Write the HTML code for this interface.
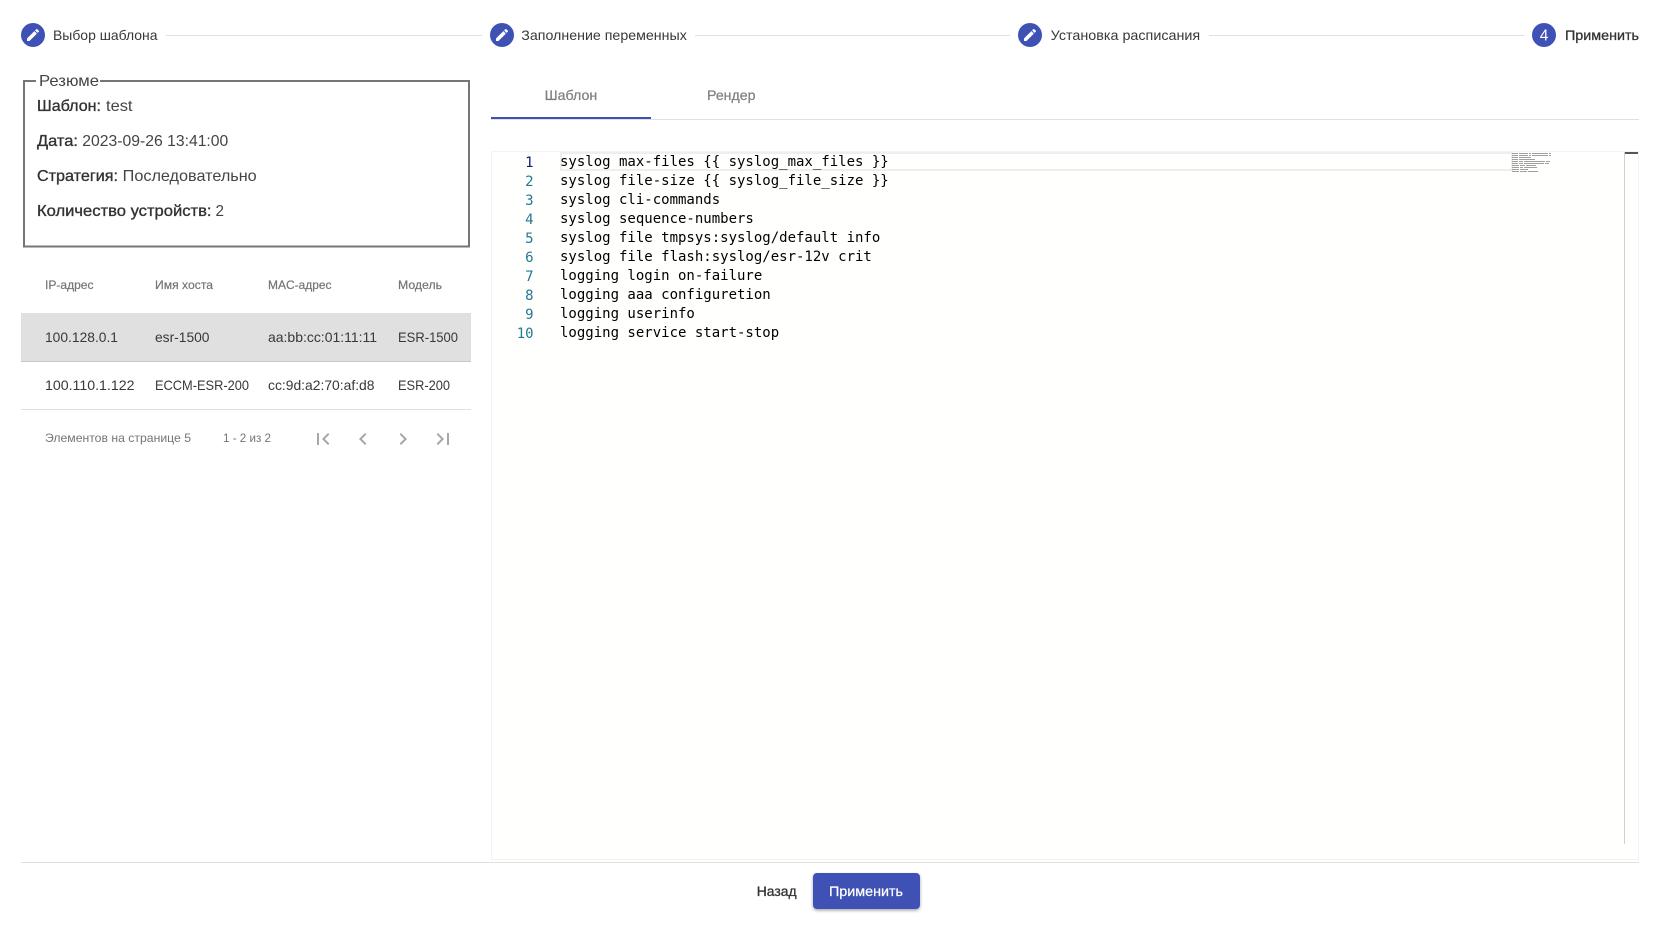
<!DOCTYPE html>
<html lang="ru">
<head>
<meta charset="utf-8">
<title>Применить</title>
<style>
html,body{margin:0;padding:0;background:#fff;width:1660px;height:942px;overflow:hidden}
svg{display:block}
text{font-family:"Liberation Sans","Noto Sans CJK JP",sans-serif;font-size:14px;fill:#383838}
.b{fill:#333;stroke:#333;stroke-width:.3}
.h{font-size:12px;fill:#757575;stroke:#757575;stroke-width:.2}
.p{font-size:12px;fill:#757575}
.s{font-size:16px;fill:#444}
.sb{font-size:16px;fill:#333;stroke:#333;stroke-width:.35}
.t{fill:#808080;stroke:#808080;stroke-width:.25}
.c{font-family:"DejaVu Sans Mono",monospace;fill:#000}
.l{font-family:"DejaVu Sans Mono",monospace;fill:#237893;text-anchor:end}
</style>
</head>
<body>
<svg width="1660" height="942" viewBox="0 0 1660 942" xmlns="http://www.w3.org/2000/svg">
<defs>
<filter id="sh" x="-10%" y="-20%" width="120%" height="150%"><feDropShadow dx="0" dy="1.5" stdDeviation="1.6" flood-color="#000" flood-opacity=".35"/></filter>
<path id="pen" d="M3 17.25V21h3.75L17.81 9.94l-3.75-3.75L3 17.25zM20.71 7.04c.39-.39.39-1.02 0-1.41l-2.34-2.34c-.39-.39-1.02-.39-1.41 0l-1.83 1.83 3.75 3.75 1.83-1.83z" fill="#fff"/>
</defs>

<!-- stepper -->
<rect x="166" y="35" width="316" height="1" fill="#e0e0e0"/>
<rect x="695" y="35" width="315" height="1" fill="#e0e0e0"/>
<rect x="1209" y="35" width="315" height="1" fill="#e0e0e0"/>
<circle cx="33" cy="35" r="12" fill="#3f51b5"/>
<use href="#pen" transform="translate(25 27) scale(.667)"/>
<text x="53" y="40" textLength="104.5" lengthAdjust="spacingAndGlyphs">Выбор шаблона</text>
<circle cx="502" cy="35" r="12" fill="#3f51b5"/>
<use href="#pen" transform="translate(494 27) scale(.667)"/>
<text x="521.3" y="40" textLength="165.5" lengthAdjust="spacingAndGlyphs">Заполнение переменных</text>
<circle cx="1030" cy="35" r="12" fill="#3f51b5"/>
<use href="#pen" transform="translate(1022 27) scale(.667)"/>
<text x="1050.7" y="40" textLength="149.5" lengthAdjust="spacingAndGlyphs">Установка расписания</text>
<circle cx="1544" cy="35" r="12" fill="#3f51b5"/>
<text x="1544" y="40.5" text-anchor="middle" style="fill:#fff;font-size:15.5px">4</text>
<text class="b" x="1565" y="40" textLength="74" lengthAdjust="spacingAndGlyphs">Применить</text>

<!-- summary -->
<rect x="24" y="81" width="445" height="165.5" fill="none" stroke="#767676" stroke-width="2"/>
<rect x="36" y="76" width="64" height="8" fill="#fff"/>
<text class="s" x="39" y="86" textLength="60" lengthAdjust="spacingAndGlyphs">Резюме</text>
<text class="sb" x="37" y="111" textLength="64" lengthAdjust="spacingAndGlyphs">Шаблон:</text>
<text class="s" x="106" y="111" textLength="26.5" lengthAdjust="spacingAndGlyphs">test</text>
<text class="sb" x="37" y="146" textLength="41" lengthAdjust="spacingAndGlyphs">Дата:</text>
<text class="s" x="82.3" y="146" textLength="146" lengthAdjust="spacingAndGlyphs">2023-09-26 13:41:00</text>
<text class="sb" x="37" y="181" textLength="81" lengthAdjust="spacingAndGlyphs">Стратегия:</text>
<text class="s" x="122.7" y="181" textLength="134" lengthAdjust="spacingAndGlyphs">Последовательно</text>
<text class="sb" x="37" y="216" textLength="174.5" lengthAdjust="spacingAndGlyphs">Количество устройств:</text>
<text class="s" x="215.5" y="216" textLength="8.5" lengthAdjust="spacingAndGlyphs">2</text>

<!-- table -->
<text class="h" x="45" y="289" textLength="48.5" lengthAdjust="spacingAndGlyphs">IP-адрес</text>
<text class="h" x="155" y="289" textLength="58" lengthAdjust="spacingAndGlyphs">Имя хоста</text>
<text class="h" x="268" y="289" textLength="63.5" lengthAdjust="spacingAndGlyphs">MAC-адрес</text>
<text class="h" x="398" y="289" textLength="44" lengthAdjust="spacingAndGlyphs">Модель</text>
<rect x="21" y="313" width="450" height="48" fill="#e0e0e0"/>
<rect x="21" y="361" width="450" height="1" fill="#c8c8c8"/>
<rect x="21" y="409" width="450" height="1" fill="#e0e0e0"/>
<text x="45" y="342" textLength="73" lengthAdjust="spacingAndGlyphs">100.128.0.1</text>
<text x="155" y="342" textLength="54.5" lengthAdjust="spacingAndGlyphs">esr-1500</text>
<text x="268" y="342" textLength="109" lengthAdjust="spacingAndGlyphs">aa:bb:cc:01:11:11</text>
<text x="398" y="342" textLength="60" lengthAdjust="spacingAndGlyphs">ESR-1500</text>
<text x="45" y="390" textLength="89.5" lengthAdjust="spacingAndGlyphs">100.110.1.122</text>
<text x="155" y="390" textLength="94" lengthAdjust="spacingAndGlyphs">ECCM-ESR-200</text>
<text x="268" y="390" textLength="106.5" lengthAdjust="spacingAndGlyphs">cc:9d:a2:70:af:d8</text>
<text x="398" y="390" textLength="52" lengthAdjust="spacingAndGlyphs">ESR-200</text>

<!-- paginator -->
<text class="p" x="45" y="442" textLength="146" lengthAdjust="spacingAndGlyphs">Элементов на странице 5</text>
<text class="p" x="223" y="442" textLength="48" lengthAdjust="spacingAndGlyphs">1 - 2 из 2</text>
<g fill="#a6a6a6">
<path transform="translate(311 427)" d="M18.41 16.59L13.82 12l4.59-4.59L17 6l-6 6 6 6zM6 6h2v12H6z"/>
<path transform="translate(351 427)" d="M15.41 7.41L14 6l-6 6 6 6 1.41-1.41L10.83 12z"/>
<path transform="translate(391 427)" d="M10 6L8.59 7.41 13.17 12l-4.58 4.59L10 18l6-6z"/>
<path transform="translate(431 427)" d="M5.59 7.41L10.18 12l-4.59 4.59L7 18l6-6-6-6zM16 6h2v12h-2z"/>
</g>

<!-- tabs -->
<text class="t" x="544.7" y="100" textLength="52.5" lengthAdjust="spacingAndGlyphs">Шаблон</text>
<text class="t" x="707" y="100" textLength="48.5" lengthAdjust="spacingAndGlyphs">Рендер</text>
<rect x="491" y="119" width="1148" height="1" fill="#e0e0e0"/>
<rect x="491" y="117" width="160" height="2" fill="#3f51b5"/>

<!-- editor -->
<rect x="491.5" y="151.5" width="1147" height="708" fill="#fffffe" stroke="#f3f3f3"/>
<rect x="561" y="153" width="951" height="17" fill="none" stroke="#eeeeee" stroke-width="2"/>
<text class="l" x="533.6" y="167" style="fill:#0b216f">1</text>
<text class="l" x="533.6" y="186">2</text>
<text class="l" x="533.6" y="205">3</text>
<text class="l" x="533.6" y="224">4</text>
<text class="l" x="533.6" y="243">5</text>
<text class="l" x="533.6" y="262">6</text>
<text class="l" x="533.6" y="281">7</text>
<text class="l" x="533.6" y="300">8</text>
<text class="l" x="533.6" y="319">9</text>
<text class="l" x="533.6" y="338">10</text>
<text class="c" x="560" y="166">syslog max-files {{ syslog_max_files }}</text>
<text class="c" x="560" y="185">syslog file-size {{ syslog_file_size }}</text>
<text class="c" x="560" y="204">syslog cli-commands</text>
<text class="c" x="560" y="223">syslog sequence-numbers</text>
<text class="c" x="560" y="242">syslog file tmpsys:syslog/default info</text>
<text class="c" x="560" y="261">syslog file flash:syslog/esr-12v crit</text>
<text class="c" x="560" y="280">logging login on-failure</text>
<text class="c" x="560" y="299">logging aaa configuretion</text>
<text class="c" x="560" y="318">logging userinfo</text>
<text class="c" x="560" y="337">logging service start-stop</text>

<!-- minimap -->
<g fill="none" stroke="#a0a0a0" stroke-width="1">
<path d="M1512 153.5h60" stroke-dasharray="6 1 9 1 2 1 16 1 2 99"/>
<path d="M1512 155.5h60" stroke-dasharray="6 1 9 1 2 1 16 1 2 99"/>
<path d="M1512 157.5h60" stroke-dasharray="6 1 12 99"/>
<path d="M1512 159.5h60" stroke-dasharray="6 1 16 99"/>
<path d="M1512 161.5h60" stroke-dasharray="6 1 4 1 21 1 4 99"/>
<path d="M1512 163.5h60" stroke-dasharray="6 1 4 1 20 1 4 99"/>
<path d="M1512 165.5h60" stroke-dasharray="7 1 5 1 10 99"/>
<path d="M1512 167.5h60" stroke-dasharray="7 1 3 1 13 99"/>
<path d="M1512 169.5h60" stroke-dasharray="7 1 8 99"/>
<path d="M1512 171.5h60" stroke-dasharray="7 1 7 1 10 99"/>
</g>

<!-- scrollbar / overview ruler -->
<rect x="1624" y="152" width="1" height="692" fill="#d0d0d0"/>
<rect x="1625" y="152" width="13" height="2" fill="#555"/>

<!-- footer -->
<rect x="21" y="862" width="1618" height="1" fill="#dfdfdf"/>
<text class="b" x="756.7" y="896" textLength="40" lengthAdjust="spacingAndGlyphs">Назад</text>
<rect x="813" y="873" width="107" height="36" rx="4" fill="#3f51b5" filter="url(#sh)"/>
<text x="829" y="896" textLength="74" lengthAdjust="spacingAndGlyphs" style="fill:#fff;stroke:#fff;stroke-width:.25">Применить</text>
</svg>
</body>
</html>
